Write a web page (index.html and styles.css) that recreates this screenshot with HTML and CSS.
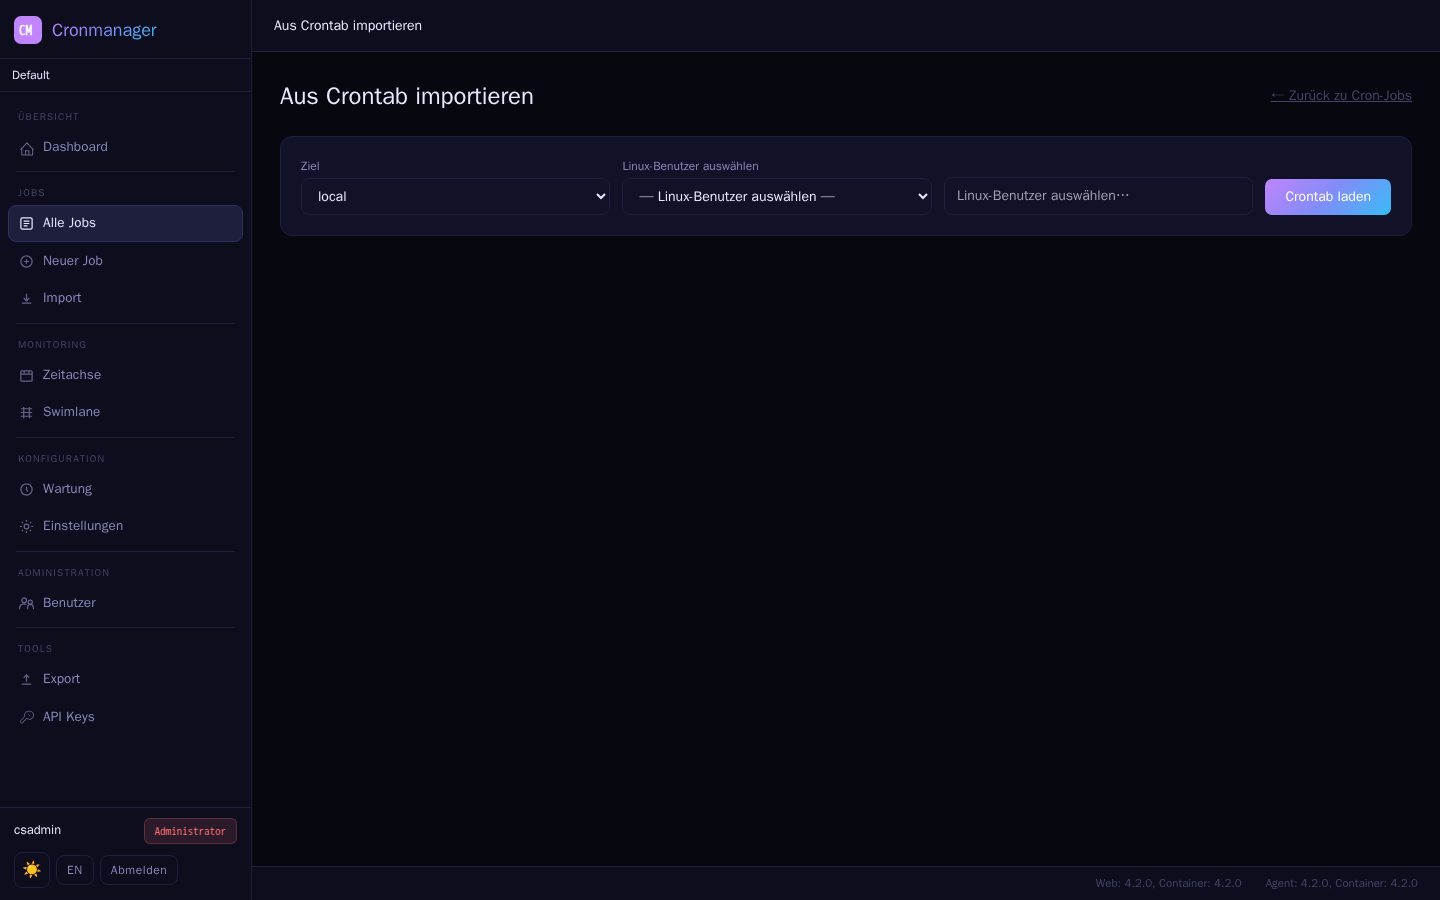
FILE: index.html
```html
<!DOCTYPE html>
<html lang="de">
<head>
  <meta charset="utf-8">
  <title>Aus Crontab importieren</title>
  <link rel="stylesheet" href="styles.css">
</head>
<body>

<aside class="sidebar">
  <div class="brand">
    <div class="logo">CM</div>
    <span class="brand-name">Cronmanager</span>
  </div>
  <div class="instance">Default</div>

  <nav class="nav">
    <div class="nav-section">
      <div class="nav-label">Übersicht</div>
      <a class="nav-item"><svg class="icon icon-home" viewBox="0 0 16 16"><path d="M1.500 9.500L8.500 2l7 7.500M3 8v7h11.500V8M7 15v-4.500h3.500V15"/></svg>Dashboard</a>
    </div>
    <div class="nav-section">
      <div class="nav-label">Jobs</div>
      <a class="nav-item active"><svg class="icon" viewBox="0 0 16 16"><rect x="2" y="2" width="12" height="12" rx="1.500"/><path d="M5 5.500h6M5 8h6M5 10.500h4"/></svg>Alle Jobs</a>
      <a class="nav-item"><svg class="icon" viewBox="0 0 16 16"><circle cx="8" cy="8" r="6"/><path d="M8 5.500v5M5.500 8h5"/></svg>Neuer Job</a>
      <a class="nav-item"><svg class="icon" viewBox="0 0 16 16"><path d="M8 3v7M5 7.500l3 3 3-3M3 13h10"/></svg>Import</a>
    </div>
    <div class="nav-section">
      <div class="nav-label">Monitoring</div>
      <a class="nav-item"><svg class="icon" viewBox="0 0 16 16"><rect x="2" y="3" width="12" height="11" rx="1"/><path d="M2 6.500h12M5.500 3v2.500M10.500 3v2.500"/></svg>Zeitachse</a>
      <a class="nav-item"><svg class="icon" viewBox="0 0 16 16"><path d="M2 4h12M2 8h12M2 12h12M5 2v12M11 2v12"/></svg>Swimlane</a>
    </div>
    <div class="nav-section">
      <div class="nav-label">Konfiguration</div>
      <a class="nav-item"><svg class="icon" viewBox="0 0 16 16"><circle cx="8" cy="8" r="6"/><path d="M8 5v3l1.500 2"/></svg>Wartung</a>
      <a class="nav-item"><svg class="icon" viewBox="0 0 16 16"><circle cx="8" cy="8" r="2.500"/><path d="M8 1v2M8 13v2M1 8h2M13 8h2M3.050 3.050l1.200 1.200M11.750 11.750l1.200 1.200M3.050 12.950l1.200-1.200M11.750 4.250l1.200-1.200"/></svg>Einstellungen</a>
    </div>
    <div class="nav-section">
      <div class="nav-label">Administration</div>
      <a class="nav-item"><svg class="icon" viewBox="0 0 16 16"><circle cx="5.500" cy="4.500" r="2.500"/><path d="M.5 14c0-3.500 2-5.500 5-5.500 1 0 1.700.2 2.300.5"/><circle cx="12" cy="6.500" r="2.200"/><path d="M9 14c0-3 1-5 3-5s3.500 2 3.500 5"/></svg>Benutzer</a>
    </div>
    <div class="nav-section">
      <div class="nav-label">Tools</div>
      <a class="nav-item"><svg class="icon" viewBox="0 0 16 16"><path d="M8 10.500V3.500M5 6l3-3 3 3M3 13h10"/></svg>Export</a>
      <a class="nav-item"><svg class="icon icon-key" viewBox="0 0 16 16"><path d="M10 1.500a4.300 4.300 0 0 0-4.100 5.500L2 11.200C1 12.400 1.600 14 3 14c.8 0 1.200-.4 1.600-1l.7-1.600 1.600-.5.6-1.500 1-.6A4.300 4.300 0 1 0 10 1.500z"/><path d="M10 4.500l1.500 1.500"/></svg>API Keys</a>
    </div>
  </nav>

  <div class="sidebar-footer">
    <div class="user-row">
      <span class="user-name">csadmin</span>
      <span class="role">Administrator</span>
    </div>
    <div class="actions">
      <button class="btn-theme">☀️</button>
      <button class="btn-small">EN</button>
      <button class="btn-small">Abmelden</button>
    </div>
  </div>
</aside>

<div class="main">
  <header class="topbar">Aus Crontab importieren</header>

  <main class="content">
    <div class="page-head">
      <h1>Aus Crontab importieren</h1>
      <a class="back">← Zurück zu Cron-Jobs</a>
    </div>

    <form class="card">
      <div class="field">
        <label for="target">Ziel</label>
        <select id="target"><option>local</option></select>
      </div>
      <div class="field">
        <label for="user">Linux-Benutzer auswählen</label>
        <select id="user"><option>— Linux-Benutzer auswählen —</option></select>
      </div>
      <div class="field">
        <input type="text" placeholder="Linux-Benutzer auswählen…">
      </div>
      <button type="button" class="btn-primary">Crontab laden</button>
    </form>
  </main>

  <footer class="footer">
    <span>Web: 4.2.0, Container: 4.2.0</span>
    <span>Agent: 4.2.0, Container: 4.2.0</span>
  </footer>
</div>

</body>
</html>
```
FILE: styles.css
```css
* {
  box-sizing: border-box;
}

body {
  margin: 0;
  height: 100vh;
  display: flex;
  overflow: hidden;
  background: #07070f;
  color: #e8e8ff;
  font-family: 'WenQuanYi Zen Hei', 'Liberation Sans', sans-serif;
  font-size: 14px;
  line-height: 1.5;
}

button, input, select {
  font-family: inherit;
}

/* Sidebar */
.sidebar {
  width: 252px;
  flex-shrink: 0;
  display: flex;
  flex-direction: column;
  background: #0d0d1e;
  border-right: 1px solid #1e1e3f;
}

.brand {
  display: flex;
  align-items: center;
  gap: 10px;
  height: 59px;
  padding: 0 14px;
  padding-top: 1px;
  border-bottom: 1px solid #1e1e3f;
}

.logo {
  width: 28px;
  height: 28px;
  padding-left: 5px;
  border-radius: 7px;
  background: #c084fc;
  color: #fff;
  font-family: 'WenQuanYi Zen Hei Mono', 'Liberation Mono', monospace;
  font-size: 13px;
  font-weight: 700;
  line-height: 30px;
  -webkit-text-stroke: 0.4px #fff;
}

.brand-name {
  padding-top: 2px;
  font-size: 18px;
  background: linear-gradient(135deg, #c084fc, #818cf8, #38bdf8);
  -webkit-background-clip: text;
  background-clip: text;
  color: transparent;
}

.instance {
  height: 33px;
  padding: 0 12px;
  font-size: 12px;
  line-height: 32px;
  border-bottom: 1px solid #1e1e3f;
}

.nav {
  flex: 1;
  padding: 3.8px 8px 0;
}

.nav-section + .nav-section::before {
  content: '';
  display: block;
  height: 1px;
  margin: 0 8px;
  background: #1e1e3f;
}

.nav-label {
  height: 33px;
  padding: 13px 10px 0;
  color: #44446a;
  font-size: 10px;
  letter-spacing: 1.15px;
  line-height: 16px;
  text-transform: uppercase;
}

.nav-item {
  display: flex;
  align-items: center;
  gap: 9px;
  height: 36.5px;
  margin-bottom: 1px;
  padding: 0 10px;
  border: 1px solid transparent;
  border-radius: 8px;
  color: #8888bb;
  font-size: 13.5px;
  letter-spacing: 0.1px;
}

.nav-section .nav-item:last-child {
  margin-bottom: 6px;
}

.nav-item.active {
  background: #1e1f3c;
  border-color: #2e3060;
  color: #e8e8ff;
}

.icon {
  width: 15px;
  height: 15px;
  fill: none;
  stroke: currentColor;
  stroke-width: 1.3;
  opacity: 0.7;
}

.icon-home {
  margin-top: 2px;
  stroke-width: 1.1;
}

.icon-key {
  stroke-width: 1;
}

.active .icon {
  opacity: 1;
}

.sidebar-footer {
  height: 93px;
  padding: 10px 14px;
  border-top: 1px solid #1e1e3f;
}

.user-row {
  display: flex;
  justify-content: space-between;
  height: 26px;
}

.user-name {
  font-size: 12.8px;
  line-height: 24px;
}

.role {
  padding: 0 10px;
  border: 1px solid rgba(248, 113, 113, 0.25);
  border-radius: 6px;
  background: rgba(248, 113, 113, 0.13);
  color: #f87171;
  font-family: 'WenQuanYi Zen Hei Mono', 'Liberation Mono', monospace;
  font-size: 11px;
  line-height: 25px;
}

.actions {
  display: flex;
  align-items: center;
  gap: 6px;
  margin-top: 8px;
}

.btn-theme, .btn-small {
  background: transparent;
  border: 1px solid #1e1e3f;
  border-radius: 8px;
  color: #8888bb;
}

.btn-theme {
  width: 36px;
  height: 36px;
  padding: 0;
  font-size: 16px;
}

.btn-small {
  height: 30px;
  padding: 0 10px;
  font-size: 12px;
  letter-spacing: 0.6px;
}

/* Main column */
.main {
  flex: 1;
  display: flex;
  flex-direction: column;
}

.topbar {
  height: 52px;
  padding: 0 22px;
  line-height: 51px;
  background: #0d0d1e;
  border-bottom: 1px solid #1e1e3f;
}

.content {
  flex: 1;
  padding: 26px 28px;
}

.page-head {
  display: flex;
  justify-content: space-between;
  align-items: center;
  height: 36px;
  margin-bottom: 22px;
}

h1 {
  margin: 0;
  font-size: 24px;
  font-weight: 400;
}

.back {
  padding-bottom: 2px;
  color: #44446a;
  text-decoration: underline;
}

.card {
  display: flex;
  align-items: flex-end;
  gap: 12px;
  height: 100px;
  padding: 20px;
  background: #111128;
  border: 1px solid #1e1e3f;
  border-radius: 12px;
}

.field {
  flex: 1;
}

.field label {
  display: block;
  margin-bottom: 3px;
  color: #8888bb;
  font-size: 12px;
  line-height: 18px;
}

.field select,
.field input {
  display: block;
  width: 100%;
  height: 37px;
  padding: 0 12px;
  background: #111128;
  border: 1px solid #1e1e3f;
  border-radius: 8px;
  color: #e8e8ff;
  font-size: 14px;
}

.field input {
  height: 38px;
}

.field input::placeholder {
  color: #9ca3af;
}

.btn-primary {
  height: 36px;
  padding: 0 20px;
  border: none;
  border-radius: 7px;
  background: linear-gradient(135deg, #c084fc, #818cf8, #38bdf8);
  color: #fff;
  font-size: 14px;
}

.footer {
  display: flex;
  justify-content: flex-end;
  gap: 24px;
  height: 34px;
  padding: 0 22px;
  color: #44446a;
  background: #0d0d1e;
  border-top: 1px solid #1e1e3f;
  font-size: 11.5px;
  line-height: 33px;
}
```
